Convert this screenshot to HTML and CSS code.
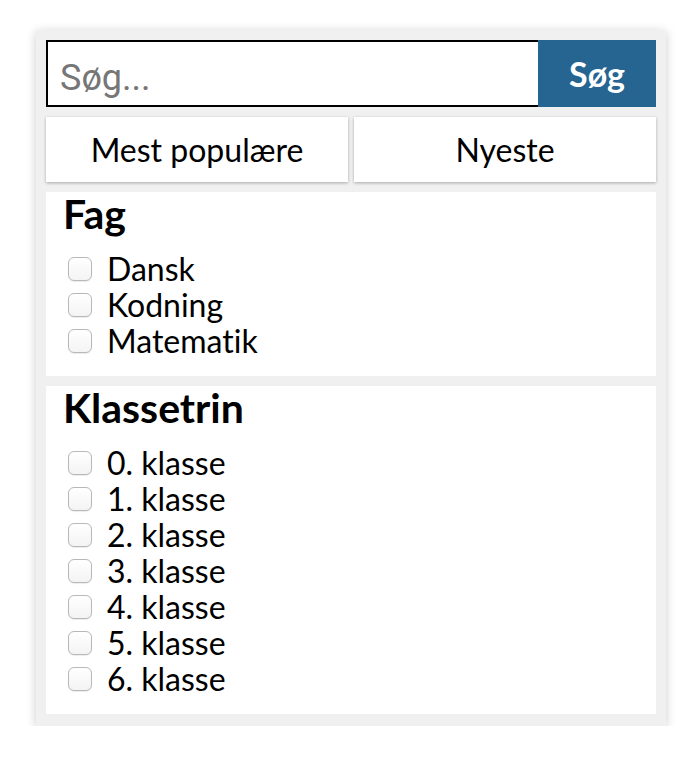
FILE: index.html
```html
<!DOCTYPE html>
<html lang="da">
  <head>
    <meta charset="UTF-8" />
    <meta name="viewport" content="width=device-width, initial-scale=1.0" />
    <title>Søg</title>
    <link rel="stylesheet" href="styles.css">
  </head>
  <body>
    <div class="panel">
      <form class="search" onsubmit="return false">
        <input type="text" placeholder="Søg..." />
        <button type="submit">Søg</button>
      </form>

      <div class="sort">
        <button>Mest populære</button>
        <button>Nyeste</button>
      </div>

      <div class="filter">
        <h2>Fag</h2>
        <label><input type="checkbox" /> Dansk</label>
        <label><input type="checkbox" /> Kodning</label>
        <label><input type="checkbox" /> Matematik</label>
      </div>

      <div class="filter">
        <h2>Klassetrin</h2>
        <label><input type="checkbox" /> 0. klasse</label>
        <label><input type="checkbox" /> 1. klasse</label>
        <label><input type="checkbox" /> 2. klasse</label>
        <label><input type="checkbox" /> 3. klasse</label>
        <label><input type="checkbox" /> 4. klasse</label>
        <label><input type="checkbox" /> 5. klasse</label>
        <label><input type="checkbox" /> 6. klasse</label>
      </div>
    </div>
  </body>
</html>
```

FILE: styles.css
```css
body {
    margin: 0;
    padding: 30px 0 0 36px;
    background-color: #fff;
    font-family: Lato, "Noto Sans", sans-serif;
    font-variant-ligatures: none;
    color: #000;
}
.panel {
    width: 610px;
    padding: 10px 10px 12px;
    background-color: #f0f0f0;
    box-shadow: 0 2px 10px rgba(0, 0, 0, 0.2);
    display: flex;
    flex-direction: column;
    gap: 10px;
}
.search {
    display: flex;
    margin: 0;
    height: 67px;
}
.search input {
    flex: 1;
    min-width: 0;
    box-sizing: border-box;
    border: 2px solid #000;
    border-right: none;
    padding: 8px 12px 0;
    font-family: Roboto, "Liberation Sans", sans-serif;
    font-size: 36px;
    outline: none;
}
.search input::placeholder {
    color: #767676;
}
.search button {
    width: 118px;
    border: none;
    background-color: #266591;
    color: #fff;
    font-family: Lato, sans-serif;
    font-weight: bold;
    font-size: 34px;
    cursor: pointer;
}
.sort {
    display: flex;
    gap: 6px;
    height: 65px;
}
.sort button {
    flex: 1;
    border: none;
    background-color: #fff;
    box-shadow: 0 1px 3px rgba(0, 0, 0, 0.3);
    font-family: Lato, sans-serif;
    font-variant-ligatures: none;
    font-size: 32px;
    color: #000;
    cursor: pointer;
}
.filter {
    background-color: #fff;
    padding: 2px 17px 17px;
}
.filter h2 {
    margin: 0 0 17px;
    font-size: 41px;
    line-height: 40px;
}
.filter label {
    display: flex;
    align-items: center;
    height: 36px;
    font-size: 32px;
    line-height: 36px;
}
.filter input[type="checkbox"] {
    appearance: none;
    width: 24px;
    height: 24px;
    margin: 0 15px 0 5px;
    border: 1px solid #b8b8b8;
    border-radius: 6px;
    background: linear-gradient(#fff, #f4f4f4);
    box-shadow: 0 1px 1px rgba(0, 0, 0, 0.08);
}
.filter input[type="checkbox"]:checked {
    background: #266591;
    border-color: #266591;
}
```
